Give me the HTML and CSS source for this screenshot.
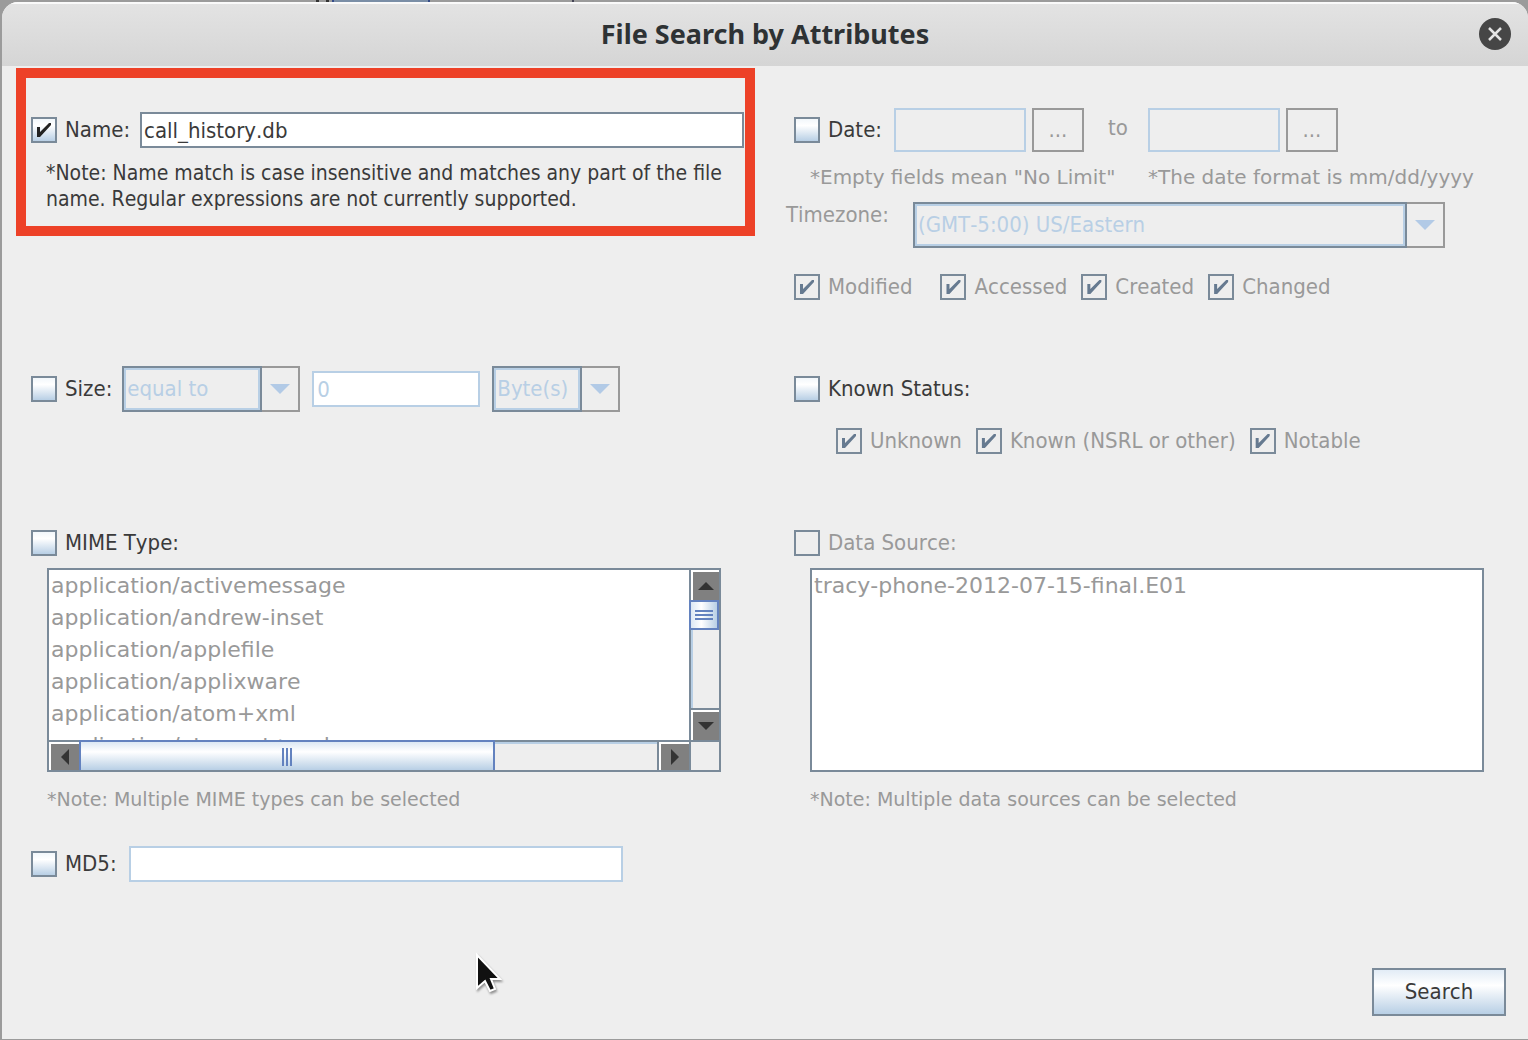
FILE: index.html
```html
<!DOCTYPE html>
<html lang="en">
<head>
<meta charset="utf-8">
<title>File Search by Attributes</title>
<link rel="stylesheet" href="styles.css">
</head>
<body>
<form class="dialog">
  <header class="titlebar">
    <h1 class="title">File Search by Attributes</h1>
    <button class="close" type="button" aria-label="Close">
      <svg viewBox="0 0 32 32" width="32" height="32"><circle cx="16" cy="16" r="16" fill="#464646"/><path d="M10 10 22 22M22 10 10 22" stroke="#e4e4e4" stroke-width="2.5"/></svg>
    </button>
  </header>

  <main class="filters">
    <section class="name-filter">
      <div class="row">
        <input class="check" type="checkbox" id="name-on" checked>
        <label for="name-on">Name:</label>
        <input class="field name-field" type="text" value="call_history.db" aria-label="File name">
      </div>
      <p class="note name-note">*Note: Name match is case insensitive and matches any part of the file name. Regular expressions are not currently supported.</p>
    </section>

    <section class="filter date-filter">
      <div class="row date-row">
        <input class="check" type="checkbox" id="date-on">
        <label for="date-on">Date:</label>
        <input class="field date-field from" type="text" disabled aria-label="From date">
        <button class="browse" type="button" disabled>...</button>
        <label class="muted to" for="date-to">to</label>
        <input class="field date-field" type="text" id="date-to" disabled>
        <button class="browse" type="button" disabled>...</button>
      </div>
      <div class="hints">
        <p class="note muted">*Empty fields mean "No Limit"</p>
        <p class="note muted">*The date format is mm/dd/yyyy</p>
      </div>
      <div class="zone-row">
        <label class="muted" for="zone">Timezone:</label>
        <span class="combo zone"><select id="zone" disabled><option>(GMT-5:00) US/Eastern</option></select><span class="arrow"></span></span>
      </div>
      <div class="row options">
        <span class="option modified"><input class="check" type="checkbox" id="modified" checked disabled><label for="modified">Modified</label></span>
        <span class="option"><input class="check" type="checkbox" id="accessed" checked disabled><label for="accessed">Accessed</label></span>
        <span class="option"><input class="check" type="checkbox" id="created" checked disabled><label for="created">Created</label></span>
        <span class="option"><input class="check" type="checkbox" id="changed" checked disabled><label for="changed">Changed</label></span>
      </div>
    </section>

    <section class="filter">
      <div class="row size-row">
        <input class="check" type="checkbox" id="size-on">
        <label for="size-on">Size:</label>
        <span class="combo compare"><select disabled aria-label="Comparison"><option>equal to</option></select><span class="arrow"></span></span>
        <input class="field size-field" type="text" value="0" disabled aria-label="Size">
        <span class="combo unit"><select disabled aria-label="Unit"><option>Byte(s)</option></select><span class="arrow"></span></span>
      </div>
    </section>

    <section class="filter">
      <div class="row size-row">
        <input class="check" type="checkbox" id="known-on">
        <label for="known-on">Known Status:</label>
      </div>
      <div class="row options known-options">
        <span class="option"><input class="check" type="checkbox" id="unknown" checked disabled><label for="unknown">Unknown</label></span>
        <span class="option"><input class="check" type="checkbox" id="known" checked disabled><label for="known">Known (NSRL or other)</label></span>
        <span class="option"><input class="check" type="checkbox" id="notable" checked disabled><label for="notable">Notable</label></span>
      </div>
    </section>

    <section class="filter">
      <div class="row">
        <input class="check" type="checkbox" id="mime-on">
        <label for="mime-on">MIME Type:</label>
      </div>
      <div class="listbox scrolling">
        <select class="list" multiple disabled aria-label="MIME types">
          <option>application/activemessage</option>
          <option>application/andrew-inset</option>
          <option>application/applefile</option>
          <option>application/applixware</option>
          <option>application/atom+xml</option>
          <option>application/atomcat+xml</option>
        </select>
        <div class="vbar">
          <span class="end"><svg viewBox="0 0 18 10" width="18" height="10"><path d="M1 9 9 1 17 9Z" fill="#333"/></svg></span>
          <span class="thumb"></span>
          <span class="track"></span>
          <span class="end"><svg viewBox="0 0 18 10" width="18" height="10"><path d="M1 1 9 9 17 1Z" fill="#333"/></svg></span>
        </div>
        <div class="hbar">
          <span class="end"><svg viewBox="0 0 10 18" width="10" height="18"><path d="M9 1 1 9 9 17Z" fill="#333"/></svg></span>
          <span class="thumb"></span>
          <span class="track"></span>
          <span class="end"><svg viewBox="0 0 10 18" width="10" height="18"><path d="M1 1 9 9 1 17Z" fill="#333"/></svg></span>
        </div>
        <div class="corner"></div>
      </div>
      <p class="note muted list-note">*Note: Multiple MIME types can be selected</p>
    </section>

    <section class="filter">
      <div class="row">
        <input class="check" type="checkbox" id="source-on" disabled>
        <label for="source-on">Data Source:</label>
      </div>
      <div class="listbox">
        <select class="list" multiple disabled aria-label="Data sources">
          <option>tracy-phone-2012-07-15-final.E01</option>
        </select>
      </div>
      <p class="note muted list-note">*Note: Multiple data sources can be selected</p>
    </section>

    <section class="filter">
      <div class="row">
        <input class="check" type="checkbox" id="md5-on">
        <label for="md5-on">MD5:</label>
        <input class="field md5-field" type="text" disabled aria-label="MD5 hash">
      </div>
    </section>
  </main>

  <footer class="actions">
    <button class="search" type="button">Search</button>
  </footer>
</form>
<svg class="pointer" viewBox="0 0 28 42" width="28" height="42"><path d="M2 3V36L10 29 15 39 20 37 16 27H25Z" fill="#111" stroke="#fff" stroke-width="2"/></svg>
</body>
</html>
```
FILE: styles.css
```css
* {
  box-sizing: border-box;
}

body {
  margin: 0;
  min-height: 100vh;
  display: flex;
  padding: 2px 0 1px 2px;
  background:
    linear-gradient(90deg, transparent 316px, #333 316px 319px, transparent 319px 326px, #333 326px 329px, transparent 329px 332px, #334a88 332px 334px, #7a8ea6 334px 428px, #334a88 428px 430px, transparent 430px 572px, #445 572px 574px, transparent 574px) 0 0 / 100% 2px no-repeat,
    #9b9b9b;
  font: 22px/26px "DejaVu Sans Condensed", "DejaVu Sans", sans-serif;
  font-stretch: condensed;
  font-kerning: none;
  color: #3a3a3a;
}

input, select, button {
  font: inherit;
  color: inherit;
  margin: 0;
  border-radius: 0;
}

p, h1 {
  margin: 0;
}

.dialog {
  flex: 1;
  display: flex;
  flex-direction: column;
  background: #eee;
  border-radius: 16px 16px 0 0;
  overflow: hidden;
}

.titlebar {
  display: grid;
  grid-template-columns: 1fr auto 1fr;
  align-items: center;
  height: 64px;
  padding: 0 17px 2px;
  background: linear-gradient(#e3e3e3, #d5d5d5);
  border-top: 2px solid #fafafa;
}

.title {
  grid-column: 2;
  font: bold 27px/36px "Noto Sans", "Open Sans", sans-serif;
  color: #2e3234;
}

.close {
  justify-self: end;
  display: flex;
  padding: 0;
  border: 0;
  background: none;
}

.filters {
  flex: 1;
  display: grid;
  grid-template-columns: 1fr 1fr;
  grid-template-rows: minmax(300px, auto) minmax(164px, auto) minmax(316px, auto) auto;
  align-content: start;
}

.filter {
  padding: 0 44px 0 29px;
}

.row {
  display: flex;
  align-items: center;
  gap: 8px;
}

.muted,
.check:disabled + label {
  color: #999;
}

.check {
  appearance: none;
  flex: none;
  width: 26px;
  height: 26px;
  border: 2px solid #7a8a99;
  background: linear-gradient(#f2f7fb, #fff 30%, #b8cfe5);
}

.check:disabled {
  background: none;
}

.check:checked::before {
  content: "";
  display: block;
  width: 22px;
  height: 22px;
  background: #222;
  clip-path: polygon(4px 8px, 7px 8px, 7px 13px, 16px 4px, 18px 4px, 18px 6px, 7px 18px, 4px 18px);
}

.check:checked:disabled::before {
  background: #667a90;
}

.field {
  height: 36px;
  padding: 0 3px;
  border: 2px solid #7a8a99;
  background: #fff;
}

.field:disabled {
  border-color: #b8cfe5;
  color: #b8cfe5;
}

.name-filter {
  align-self: start;
  min-height: 168px;
  margin: 2px 10px 0 14px;
  padding: 34px 1px 0 5px;
  border: 10px solid #ed4127;
}

.name-field {
  flex: 1;
  min-width: 0;
  margin-left: 2px;
  padding: 0 2px;
}

.note {
  font: 20px/26px "DejaVu Sans", sans-serif;
  font-kerning: none;
}

.name-note {
  padding: 12px 0 0 15px;
  font: 21px/26px "DejaVu Sans Condensed", "DejaVu Sans", sans-serif;
  font-kerning: none;
}

.date-filter {
  padding-top: 42px;
}

.date-field {
  width: 132px;
  height: 44px;
}

.date-field:disabled {
  background: none;
}

.from {
  margin-left: 4px;
}

.browse {
  width: 52px;
  height: 44px;
  margin-left: -2px;
  padding: 0;
  border: 2px solid #999;
  background: none;
  color: #999;
}

.to {
  margin: 0 12px 4px 16px;
}

.hints {
  display: grid;
  grid-template-columns: 338px auto;
  justify-content: start;
  padding: 12px 0 12px 16px;
  white-space: nowrap;
}

.hints .note {
  margin-right: -20px;
}

.zone-row {
  display: flex;
  gap: 24px;
  margin-left: -8px;
}

.combo {
  display: flex;
  height: 46px;
}

.combo select {
  appearance: none;
  flex: 1;
  min-width: 0;
  padding: 0 3px;
  border: 2px solid #7a8a99;
  box-shadow: inset 0 0 0 2px #b8cfe5;
  background: none;
  color: #b8cfe5;
  opacity: 1;
}

.arrow {
  display: flex;
  align-items: center;
  justify-content: center;
  width: 38px;
  border: 2px solid #999;
  border-left: 0;
}

.arrow::before {
  content: "";
  border: 10px solid transparent;
  border-top-color: #b2cae6;
  border-bottom: 0;
}

.zone {
  width: 532px;
}

.compare {
  width: 178px;
  margin-left: 2px;
}

.unit {
  width: 128px;
  margin-left: 4px;
}

.size-field {
  width: 168px;
  margin-left: 4px;
}

.size-row {
  height: 46px;
}

.options {
  gap: 14px;
}

.date-filter .options {
  padding-top: 26px;
}

.option {
  display: flex;
  gap: 8px;
}

.modified {
  margin-right: 14px;
}

.known-options {
  padding: 16px 0 0 42px;
}

.listbox {
  display: grid;
  height: 204px;
  margin: 12px 0 0 16px;
  border: 2px solid #7a8a99;
  background: #fff;
}

.scrolling {
  grid-template: 170px 30px / 1fr 30px;
}

.list {
  appearance: none;
  width: 100%;
  height: 100%;
  min-height: 0;
  padding: 0;
  border: 0;
  background: #fff;
  overflow: hidden;
  opacity: 1;
  font: 22px/26px "DejaVu Sans", sans-serif;
  font-kerning: none;
}

.list option {
  height: 32px;
  padding: 3px 2px;
  color: #999;
}

.vbar,
.hbar,
.corner {
  background: #eee;
  border: 0 solid #7a8a99;
}

.vbar {
  display: flex;
  flex-direction: column;
  border-left-width: 2px;
}

.hbar {
  display: flex;
  border-top-width: 2px;
}

.corner {
  border-width: 2px 0 0 2px;
}

.end {
  display: flex;
  flex: none;
  align-items: center;
  justify-content: center;
  width: 28px;
  height: 30px;
  border: 2px solid #fff;
  border-width: 2px 0 0 2px;
  background: #808080;
}

.hbar .end {
  width: 30px;
  height: 28px;
}

.track {
  flex: 1;
  border: 0 solid #7a8a99;
}

.vbar .track {
  border-bottom-width: 2px;
  box-shadow: inset 2px 0 #b8cfe5;
}

.hbar .track {
  border-right-width: 2px;
  box-shadow: inset 0 2px #b8cfe5;
}

.thumb {
  flex: none;
  border: 2px solid #6382bf;
}

.vbar .thumb {
  height: 30px;
  margin-left: -2px;
  background:
    repeating-linear-gradient(#6382bf 0 2px, transparent 2px 4px) 4px 8px / 18px 10px no-repeat,
    linear-gradient(90deg, #dce8f4, #fff 40%, #b8cfe5);
}

.hbar .thumb {
  width: 65%;
  height: 30px;
  margin-top: -2px;
  border-bottom: 0;
  background:
    repeating-linear-gradient(90deg, #6382bf 0 2px, transparent 2px 4px) 50% 6px / 10px 18px no-repeat,
    linear-gradient(#dce8f4, #fff 35%, #b8cfe5);
}

.list-note {
  padding: 14px 0 0 16px;
  font-size: 19px;
}

.md5-field {
  width: 494px;
  margin-left: 4px;
}

.actions {
  display: flex;
  justify-content: flex-end;
  padding: 0 22px 23px;
}

.search {
  width: 134px;
  height: 48px;
  border: 2px solid #7a8a99;
  background: linear-gradient(#e2ecf6, #fff 35%, #b8cfe5);
}

.pointer {
  position: absolute;
  left: 475px;
  top: 952px;
  filter: drop-shadow(1px 2px 1px #0006);
}
```
